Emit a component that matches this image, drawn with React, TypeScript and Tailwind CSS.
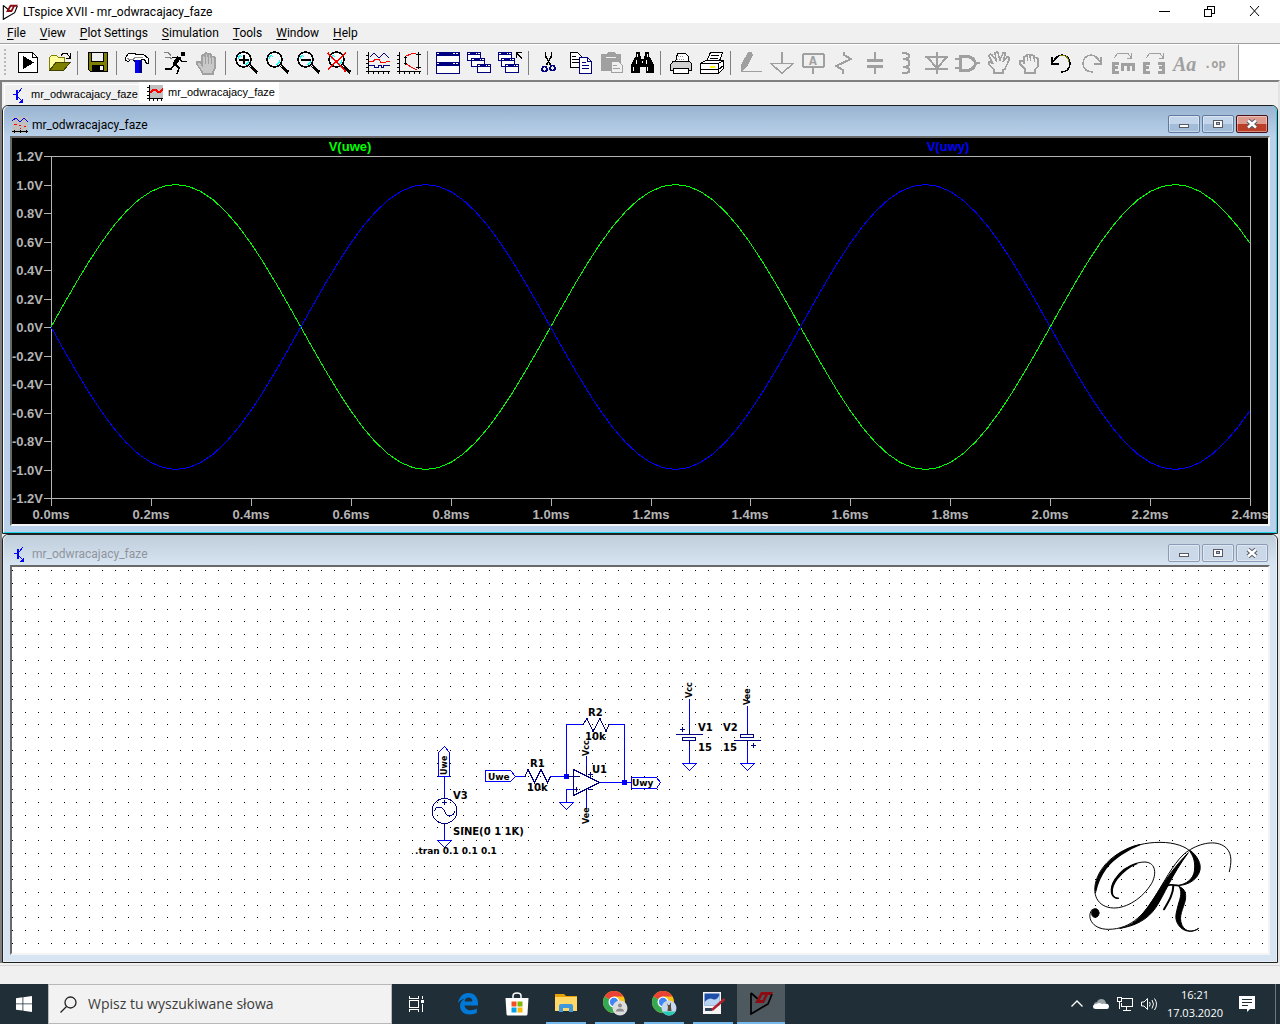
import type { ReactNode } from "react";

const NAVY = "#000080";
const GRAY = "#a0a0a0";

function Icon({ children }: { children: ReactNode }) {
  return (
    <svg viewBox="0 0 25 24" className="h-6 w-[25px]" shapeRendering="crispEdges" fill="none" aria-hidden="true">
      {children}
    </svg>
  );
}

function Lens({ children }: { children?: ReactNode }) {
  return (
    <Icon>
      <circle cx="10.5" cy="8.5" r="7.5" fill="#f8f8f8" stroke="#000" strokeWidth="1.5" />
      <path d="M5.500 8V6l2-2M15.500 9v2l-3 3M7.500 6.500l1-1" stroke="#00ffff" />
      <path d="M15.500 13.500l9 8" stroke="#000" strokeWidth="3" />
      <path d="M16 14l2 2" stroke="#fff" />
      {children}
    </Icon>
  );
}

function MiniWindow({ x, y }: { x: number; y: number }) {
  return (
    <g>
      <rect x={x + 0.5} y={y + 0.5} width="13" height="8" fill="#fff" stroke={NAVY} />
      <rect x={x} y={y} width="14" height="3" fill={NAVY} />
      <path d={`M${x + 1} ${y + 1.5}h2M${x + 9} ${y + 1.5}h1M${x + 11} ${y + 1.5}h2`} stroke="#fff" />
    </g>
  );
}

type Tool = { label: string; icon: ReactNode };

const toolGroups: Tool[][] = [
  [
    {
      label: "Run",
      icon: (
        <Icon>
          <path d="M3.500 1.500h14l5 5v15h-19z" fill="#fff" stroke="#000" />
          <path d="M17.500 1.500v5h5" stroke="#000" />
          <path d="M8 5l11 6.500L8 18z" fill="#000" />
        </Icon>
      ),
    },
    {
      label: "Open",
      icon: (
        <Icon>
          <path d="M3.500 19.500v-13l2-2h5l2 2h6v5h-9z" fill="#ffffa0" stroke="#808000" />
          <path d="M3.500 19.500l7-8.500h14l-7 8.500z" fill="#808000" stroke="#404000" />
          <path d="M15 4.500l2-2h4l3 4M24.500 2v5h-5" stroke="#000" />
        </Icon>
      ),
    },
  ],
  [
    {
      label: "Save",
      icon: (
        <Icon>
          <path d="M3.500 1.500h19v19h-17l-2-2z" fill="#808000" stroke="#000" />
          <path d="M6.500 1.500h12v9h-12z" fill="#f0f0f0" stroke="#000" />
          <path d="M7 14h12v6.500H7z" fill="#000" />
          <path d="M15 15h3v4h-3z" fill="#f0f0f0" />
        </Icon>
      ),
    },
  ],
  [
    {
      label: "Control Panel",
      icon: (
        <Icon>
          <path d="M1.500 6.500l3-4h6l2 1h7l5 4v5h-2l-2-4h-3l-1 2h-6l-1-2h-3l-2 2-3-1z" fill="#fff" stroke="#000" />
          <path d="M3 7.500l3 1h3l2-2h8" stroke="#909090" />
          <path d="M11 9h5v13h-5z" fill="#0000ff" />
          <path d="M15 9h3v13h-3z" fill={NAVY} />
        </Icon>
      ),
    },
  ],
  [
    {
      label: "Simulate",
      icon: (
        <Icon>
          <path d="M18 1h4v4h-4z" fill="#000" />
          <path d="M17 6l-5 8M9 6.500h7l3 4h5M12 13l4 4-2 6M12 13l-4 5H2" stroke="#000" strokeWidth="1.500" />
          <path d="M16 6l-5 8" stroke="#000" strokeWidth="4" />
          <path d="M1 1.500h4l3 3M2 6h4l3 2" stroke="#808080" />
        </Icon>
      ),
    },
    {
      label: "Halt",
      icon: (
        <Icon>
          <path
            d="M8 21l-5-8v-2h3l2 3V5q1-2 3 0V3q1-2 3 0v1q2-2 3 0v2q3-1 4 1v10l-2 4v2H9z"
            fill="#c8c8c8"
            stroke={GRAY}
            strokeWidth="1.500"
          />
          <path d="M11.500 4v9M14.500 4v9M17.500 5v8" stroke={GRAY} strokeWidth="1.500" />
        </Icon>
      ),
    },
  ],
  [
    {
      label: "Zoom in",
      icon: (
        <Lens>
          <path d="M11 4v9M6 9h10" stroke="#000" strokeWidth="2" />
        </Lens>
      ),
    },
    { label: "Pan", icon: <Lens /> },
    {
      label: "Zoom out",
      icon: (
        <Lens>
          <path d="M6 9h10" stroke="#000" strokeWidth="2" />
        </Lens>
      ),
    },
    {
      label: "Zoom to fit",
      icon: (
        <Lens>
          <path d="M2 2l18 19M20 2L2 18" stroke="#ff0000" strokeWidth="1.500" />
        </Lens>
      ),
    },
  ],
  [
    {
      label: "Autorange",
      icon: (
        <Icon>
          <path d="M3.500 1v22M1 20.500h24M1 4.500h2M1 8.500h2M1 12.500h2M1 16.500h2M8.500 21v2M13.500 21v2M18.500 21v2M23.500 21v2" stroke="#000" />
          <path d="M5 6l4-4 5 5 5-5 5 5" stroke={NAVY} />
          <path d="M4 10.500h4l2-2h4l2 3h4l2-1h3" stroke="#ff0000" />
          <path d="M4 14.500h5v2h4v-2h3v2h2v-2h7" stroke={NAVY} />
        </Icon>
      ),
    },
    {
      label: "Pick visible traces",
      icon: (
        <Icon>
          <path d="M3.500 1v22M1 20.500h24M1 4.500h2M1 8.500h2M1 12.500h2M1 16.500h2M8.500 21v2M13.500 21v2M18.500 21v2M23.500 21v2" stroke="#000" />
          <path d="M20 2.500h-4l-7 3M9 12l6 4 6 3" stroke="#ff0000" />
          <path d="M9.500 5v9M8 6.500h3M8 12.500h3M22.500 1v17M20 3.500h5M20 16.500h5" stroke="#000" />
        </Icon>
      ),
    },
  ],
  [
    {
      label: "Tile windows",
      icon: (
        <Icon>
          <rect x="1.500" y="1.500" width="23" height="21" fill="#fff" stroke={NAVY} />
          <path d="M1 3h24M1 13h24" stroke={NAVY} strokeWidth="4" />
          <path d="M2 2.500h2M18 2.500h2M21 2.500h2M2 12.500h2M18 12.500h2M21 12.500h2" stroke="#fff" />
        </Icon>
      ),
    },
    {
      label: "Cascade windows",
      icon: (
        <Icon>
          <MiniWindow x={1} y={1} />
          <MiniWindow x={5} y={7} />
          <MiniWindow x={11} y={13} />
        </Icon>
      ),
    },
    {
      label: "Close all windows",
      icon: (
        <Icon>
          <MiniWindow x={1} y={1} />
          <MiniWindow x={4} y={7} />
          <MiniWindow x={8} y={13} />
          <path d="M19.500 7V1.500H25M20 2l5 6" stroke="#000" strokeWidth="1.500" />
        </Icon>
      ),
    },
  ],
  [
    {
      label: "Cut",
      icon: (
        <Icon>
          <path d="M9.500 1v4l5 9M15.500 1v4l-5 9" stroke="#000" strokeWidth="1.500" />
          <circle cx="8.500" cy="18" r="2.500" stroke={NAVY} strokeWidth="1.500" />
          <circle cx="16.500" cy="17" r="2.500" stroke={NAVY} strokeWidth="1.500" />
        </Icon>
      ),
    },
    {
      label: "Copy",
      icon: (
        <Icon>
          <path d="M3.500 1.500h7l4 4v11h-11z" fill="#fff" stroke="#000" />
          <path d="M5 5.500h4M5 8.500h7M5 11.500h7" stroke="#000" />
          <path d="M12.500 6.500h8l4 4v12h-12z" fill="#fff" stroke={NAVY} />
          <path d="M20.500 6.500v4h4M15 11.500h4M15 14.500h7M15 17.500h7" stroke={NAVY} />
        </Icon>
      ),
    },
    {
      label: "Paste",
      icon: (
        <Icon>
          <path d="M3 3h5l2-2h6l2 2h5v17H3z" fill={GRAY} />
          <path d="M8 6h10" stroke="#f0f0f0" />
          <path d="M13.500 10.500h7l4 4v7h-11z" fill="#f0f0f0" stroke={GRAY} />
          <path d="M15 14.500h4M15 17.500h7" stroke={GRAY} />
        </Icon>
      ),
    },
    {
      label: "Find",
      icon: (
        <Icon>
          <path d="M7 1h4v4h1v3h3V5h1V1h4v4l2 3 3 6v8h-8v-6h-6v6H2v-8l3-6 2-3z" fill="#000" />
          <path d="M8.500 3v3M18.500 3v3M7.500 9v4M17.500 9v4M4.500 16v4M18.500 16v4M13.500 10v2" stroke="#fff" />
        </Icon>
      ),
    },
  ],
  [
    {
      label: "Print",
      icon: (
        <Icon>
          <path d="M7.500 11l2-8.500h8l3 3V11" fill="#fff" stroke="#000" />
          <path d="M2.500 13.500l3-3.500h16l2 3v6.500h-21z" fill="#d0d0d0" stroke="#000" />
          <path d="M5.500 17.500h15v5h-15z" fill="#fff" stroke="#000" />
          <path d="M10 5.500h6M9 8.500h8" stroke="#909090" strokeDasharray="1 1" />
        </Icon>
      ),
    },
    {
      label: "Print setup",
      icon: (
        <Icon>
          <path d="M7.500 10l4-8.500h12l-3 8.500" fill="#fff" stroke="#000" />
          <path d="M1.500 12.500l5-3h18v8l-5 5h-18z" fill="#fff" stroke="#000" />
          <path d="M1.500 12.500h18v10M19.500 12.500l5-3M1.500 18.500h18l5-4M12 4.500h8M11 7.500h8" stroke="#000" />
          <path d="M11 15.500h5" stroke="#ffff00" strokeWidth="2" />
        </Icon>
      ),
    },
  ],
  [
    {
      label: "Wire",
      icon: (
        <Icon>
          <path d="M10 1h4l1 3-6 12-6 5v-7z" fill={GRAY} />
          <path d="M3 20.500h21" stroke={GRAY} />
        </Icon>
      ),
    },
    {
      label: "Ground",
      icon: (
        <Icon>
          <path d="M13 1v11" stroke={GRAY} strokeWidth="2" />
          <path d="M2 12.500h22l-11 10z" stroke={GRAY} strokeWidth="1.500" />
        </Icon>
      ),
    },
    {
      label: "Label net",
      icon: (
        <Icon>
          <rect x="3" y="3" width="21" height="13" rx="2" stroke={GRAY} strokeWidth="2" />
          <path d="M13 16v7" stroke={GRAY} strokeWidth="2" />
          <text x="9" y="14" fontSize="13" fontWeight="700" fontFamily="Liberation Mono, monospace" fill={GRAY}>
            A
          </text>
        </Icon>
      ),
    },
    {
      label: "Resistor",
      icon: (
        <Icon>
          <path d="M13 1v3l7 4-15 7 7 4v4" stroke={GRAY} strokeWidth="2" />
        </Icon>
      ),
    },
    {
      label: "Capacitor",
      icon: (
        <Icon>
          <path d="M13 1v9M13 15v8" stroke={GRAY} strokeWidth="2" />
          <path d="M5 9.500h16M5 15.500h16" stroke={GRAY} strokeWidth="3" />
        </Icon>
      ),
    },
    {
      label: "Inductor",
      icon: (
        <Icon>
          <path d="M9 2h4l3 2v2l-3 2h-3 3l3 2v4l-3 2h-3 3l3 2v3l-3 1h-4" stroke={GRAY} strokeWidth="2" />
        </Icon>
      ),
    },
    {
      label: "Diode",
      icon: (
        <Icon>
          <path d="M13 1v22M1 6h23M1 18h23M3 6l10 11L23 6" stroke={GRAY} strokeWidth="2" />
        </Icon>
      ),
    },
    {
      label: "Component",
      icon: (
        <Icon>
          <path d="M5.500 5.500h7q7 1 8 7-1 6-8 7h-7z" stroke={GRAY} strokeWidth="3" />
          <path d="M0 8h5M0 17h5M20 12h5" stroke={GRAY} strokeWidth="2" />
        </Icon>
      ),
    },
    {
      label: "Move",
      icon: (
        <Icon>
          <path
            d="M8 22v-3l-5-6q-1-3 2-2l2 2-4-8q1-3 3-1l4 5-1-7q2-2 3 0l2 7 3-7q3-1 2 2l-2 7 4-5q3 0 2 3l-4 9-2 1v3z"
            stroke={GRAY}
            strokeWidth="1.500"
          />
        </Icon>
      ),
    },
    {
      label: "Drag",
      icon: (
        <Icon>
          <path
            d="M8 22v-4l-5-5v-3h4v3-7q2-2 3 0V4q2-1 3 0v1q2-2 4 0v2q3-1 4 1v7l-3 4v3z"
            stroke={GRAY}
            strokeWidth="1.500"
          />
          <path d="M10.500 5v5M13.500 5v5M17.500 7v4" stroke={GRAY} />
        </Icon>
      ),
    },
    {
      label: "Undo",
      icon: (
        <Icon>
          <path d="M5 11q4-7 9-7 8 1 8 9-1 8-9 8" stroke="#000" strokeWidth="1.500" />
          <path d="M12 4q8 0 9 7" stroke="#808000" />
          <path d="M4 6v7h7" stroke="#000" strokeWidth="2" />
        </Icon>
      ),
    },
    {
      label: "Redo",
      icon: (
        <Icon>
          <path d="M21 11q-4-7-9-7-8 1-8 9 1 8 10 8" stroke={GRAY} strokeWidth="1.500" />
          <path d="M22 6v7h-7" stroke={GRAY} strokeWidth="2" />
        </Icon>
      ),
    },
    {
      label: "Rotate",
      icon: (
        <Icon>
          <path d="M4 7l4-5h10l3 5M21.500 2v5h-5" stroke={GRAY} />
          <path d="M9 12H3.500v9.500H9M3 16.500h5M12.500 20v-6.500H23.500V20M18 13v7" stroke={GRAY} strokeWidth="3" />
        </Icon>
      ),
    },
    {
      label: "Mirror",
      icon: (
        <Icon>
          <path d="M5 7l4-5h10l3 5M22.500 2v5h-5" stroke={GRAY} />
          <path d="M9 12H3.500v9.500H9M3 16.500h5M17 12h5.500v9.500H17M23 16.500h-5" stroke={GRAY} strokeWidth="3" />
        </Icon>
      ),
    },
    {
      label: "Text",
      icon: (
        <Icon>
          <text x="1" y="20" fontSize="20" fontWeight="700" fontStyle="italic" fontFamily="Liberation Serif, serif" fill={GRAY}>
            Aa
          </text>
        </Icon>
      ),
    },
    {
      label: "SPICE directive",
      icon: (
        <Icon>
          <text x="1" y="17" fontSize="12" fontWeight="700" fontFamily="DejaVu Sans Mono, monospace" fill={GRAY}>
            .op
          </text>
        </Icon>
      ),
    },
  ],
];

function Logo({ className }: { className: string }) {
  return (
    <svg viewBox="0 0 24 24" className={className} fill="none" aria-hidden="true">
      <path d="M2 2v21l17-10 4-10M2 2l8 7" stroke="#000" strokeWidth="1.700" />
      <path d="M12 1h3l-4 8h3l-1 3H6zM14 1h10l-2 3h-3l-4 8h-3l4-8h-3z" fill="#8b0d12" />
    </svg>
  );
}

function TransistorIcon() {
  return (
    <svg viewBox="0 0 16 16" className="size-4" shapeRendering="crispEdges" fill="none" aria-hidden="true">
      <path d="M2 7.500h4M7 6l4-5M7 10l5 5" stroke="#0000ff" />
      <path d="M6 3v10" stroke="#0000ff" strokeWidth="2" />
      <path d="M12 11v5H8z" fill="#0000ff" />
    </svg>
  );
}

function TraceIcon() {
  return (
    <svg viewBox="0 0 16 16" className="size-4" shapeRendering="crispEdges" fill="none" aria-hidden="true">
      <path d="M2 0h14v13H2z" fill="#c0c0c0" />
      <path d="M2.500 0v16M0 13.500h16M0 2.500h2M0 6.500h2M0 10.500h2M6.500 14v2M10.500 14v2M14.500 14v2" stroke="#000" />
      <path d="M3 8l3-3h3l2 2h2l3-3" stroke="#ff0000" strokeWidth="1.500" />
    </svg>
  );
}

function WaveIcon() {
  return (
    <svg viewBox="0 0 16 16" className="size-4" shapeRendering="crispEdges" fill="none" aria-hidden="true">
      <path d="M0 0h16v16H0z" fill="#c0c0c0" />
      <path d="M0 4l4-3 4 4 4-4 4 4" stroke="#0000ff" />
      <path d="M2 7.500h3M7 8.500h2M12 9.500h2M8 11.500h1" stroke="#ff0000" />
      <path d="M0 14.500h16M2.500 13v3M8.500 13v3M14.500 13v3" stroke="#000" />
    </svg>
  );
}

function CaptionButtons({ active }: { active: boolean }) {
  const plain = active
    ? "border-[#5f7a9e] bg-linear-to-b from-[#c3d5ea] from-50% to-[#a3bcd8] to-50%"
    : "border-[#8a9bb5] bg-[#cbd8e7]";
  const close = active
    ? "border-[#4a1018] bg-linear-to-b from-[#dd9a8e] from-50% to-[#bb3e27] to-50%"
    : "border-[#8a9bb5] bg-[#cbd8e7]";
  const base = "flex h-[18px] w-8 items-center justify-center rounded-xs border shadow-[inset_0_0_0_1px_rgba(255,255,255,0.4)]";
  return (
    <div className="flex gap-0.5 pt-[9px]">
      <button aria-label="Minimize" className={`${base} ${plain}`}>
        <svg viewBox="0 0 12 10" className="h-2.5 w-3" shapeRendering="crispEdges" aria-hidden="true">
          <rect x="1.500" y="5.500" width="9" height="3" fill="#fff" stroke="#555a66" />
        </svg>
      </button>
      <button aria-label="Maximize" className={`${base} ${plain}`}>
        <svg viewBox="0 0 12 10" className="h-2.5 w-3" shapeRendering="crispEdges" aria-hidden="true">
          <rect x="1.500" y="1.500" width="9" height="7" fill="#fff" stroke="#555a66" />
          <rect x="4.500" y="3.500" width="3" height="2" fill="#a3bcd8" stroke="#555a66" />
        </svg>
      </button>
      <button aria-label="Close" className={`${base} ${close}`}>
        <svg viewBox="0 0 12 10" className="h-2.5 w-3" aria-hidden="true">
          <path d="M2 1.500l8 7M10 1.500l-8 7" stroke="#555a66" strokeWidth="4.500" />
          <path d="M2 1.500l8 7M10 1.500l-8 7" stroke="#fff" strokeWidth="2.500" />
        </svg>
      </button>
    </div>
  );
}

function MdiWindow({ title, icon, active, children }: { title: string; icon: ReactNode; active: boolean; children: ReactNode }) {
  return (
    <section className="rounded-t-md border border-[#202020] bg-[#f0f0f0]">
      <div
        className={`rounded-t-md border-x border-b px-1.5 pb-1.5 ${
          active
            ? "border-b-[#22d3ee] border-l-white border-r-[#22d3ee] bg-[#b9d1ea] bg-linear-to-b from-[#99b4d1] to-[#b9d1ea] to-[30px]"
            : "border-[#e8eef5] bg-[#d7e4f2] bg-linear-to-b from-[#bfcddb] to-[#d7e4f2] to-[30px]"
        }`}
      >
        <header className="flex h-[30px] items-start px-0.5">
          <span className="pt-[11px]">{icon}</span>
          <h2 className={`flex-1 pt-[11px] pl-1 leading-4 ${active ? "text-black" : "text-[#8f959c]"}`}>{title}</h2>
          <CaptionButtons active={active} />
        </header>
        <div className="border-2 border-t-[#696969] border-r-[#f4f4f4] border-b-[#f4f4f4] border-l-[#696969]">{children}</div>
      </div>
    </section>
  );
}

const PLOT = { left: 51, right: 1250, top: 156, bottom: 498 };
const msToX = (ms: number) => PLOT.left + (ms / 2.4) * (PLOT.right - PLOT.left);
const voltsToY = (v: number) => 327 - v * 142.5;

function trace(amplitude: number) {
  const points: string[] = [];
  for (let i = 0; i <= 96; i++) {
    const ms = i / 40;
    points.push(`${msToX(ms).toFixed(1)},${voltsToY(amplitude * Math.sin(2 * Math.PI * ms)).toFixed(1)}`);
  }
  return points.join(" ");
}

function Waveform() {
  const volts = Array.from({ length: 13 }, (_, i) => (6 - i) / 5);
  const times = Array.from({ length: 13 }, (_, i) => i / 5);
  return (
    <svg viewBox="12 138 1256 386" className="block w-full bg-black" fontFamily="Liberation Sans, Arial, sans-serif" fontSize="13" fontWeight="700">
      <g shapeRendering="crispEdges" fill="none" stroke="#b4b4b4">
        <rect x="51.500" y="156.500" width="1199" height="342" />
        {volts.map((v) => (
          <path key={v} d={`M44 ${Math.round(voltsToY(v)) + 0.5}h7`} />
        ))}
        {times.map((t) => (
          <path key={t} d={`M${Math.round(msToX(t)) + 0.5} 498v8`} />
        ))}
      </g>
      <g fill="#b4b4b4">
        {volts.map((v) => (
          <text key={v} x="43" y={Math.round(voltsToY(v)) + 5} textAnchor="end">
            {v.toFixed(1)}V
          </text>
        ))}
        {times.map((t) => (
          <text key={t} x={Math.round(msToX(t))} y="519" textAnchor="middle">
            {t.toFixed(1)}ms
          </text>
        ))}
      </g>
      <text x="350" y="151" textAnchor="middle" fill="#00ff00">
        V(uwe)
      </text>
      <text x="948" y="151" textAnchor="middle" fill="#0000ff">
        V(uwy)
      </text>
      <g fill="none" shapeRendering="crispEdges">
        <polyline points={trace(1)} stroke="#00ff00" />
        <polyline points={trace(-1)} stroke="#0000ff" />
      </g>
    </svg>
  );
}

function gridDots() {
  let d = "";
  for (let row = 0; row < 30; row++) {
    for (let col = 0; col < 98; col++) {
      d += `M${Math.round(12 + col * 12.89)} ${Math.round(570 + row * 12.87)}h1v1h-1z`;
    }
  }
  return d;
}

function Monogram() {
  return (
    <g transform="translate(1060 820) scale(0.3333)" fill="none" stroke="#000" strokeWidth="3" strokeLinecap="round">
      <ellipse cx="106" cy="279" rx="11" ry="13" fill="#000" />
      <path d="M97 268C78 288 94 328 145 328C215 328 258 280 300 205C335 145 360 105 392 88C430 66 475 60 500 85C517 103 514 130 508 155" />
      <path d="M176 235C150 236 148 200 168 175C195 142 225 126 255 126C290 128 289 165 275 190C248 235 200 265 160 264C112 262 92 222 112 172C138 108 215 67 300 67C345 67 378 80 392 95" />
      <path d="M176 235C152 236 150 205 172 176C190 153 215 137 232 130C200 138 178 158 165 178C148 206 150 235 176 235Z" fill="#000" strokeWidth="4" />
      <path d="M107 215C104 180 122 145 165 110C190 90 220 78 240 74C205 87 160 115 138 145C120 170 112 190 107 215Z" fill="#000" strokeWidth="4" />
      <path d="M392 92C412 108 424 130 420 150C414 178 385 195 358 196C390 188 404 168 404 144C405 120 398 106 390 95Z" fill="#000" />
      <path d="M180 325C225 318 262 300 288 262C312 226 335 165 385 98C345 138 318 178 296 212C268 256 246 290 216 311C200 320 190 323 180 325Z" fill="#000" />
      <path d="M312 203C325 190 342 195 358 197" strokeWidth="5" />
      <path d="M340 197C340 222 326 244 312 268" strokeWidth="6" />
      <path d="M358 200C376 206 379 222 376 240C370 268 354 288 366 316C378 338 400 337 416 325C398 338 372 338 356 316C344 298 347 285 352 265C358 238 369 222 358 200Z" fill="#000" />
    </g>
  );
}

function VerticalLabel({ x, y, children }: { x: number; y: number; children: string }) {
  return (
    <text transform={`translate(${x} ${y}) rotate(-90)`} fontSize="8">
      {children}
    </text>
  );
}

function Schematic() {
  return (
    <svg viewBox="12 567 1256 386" className="block w-full bg-white" fontFamily="DejaVu Sans, Verdana, sans-serif" fontSize="10" fontWeight="700">
      <path d={gridDots()} fill="#000" shapeRendering="crispEdges" />
      {/* wires, flags and grounds */}
      <g fill="none" stroke="#0000ff" shapeRendering="crispEdges">
        <path d="M438.500 776.500v-24l6-6 5 6v24zM444.500 776v22M444.500 824v16M437.500 840.500h14l-7 7z" />
        <path d="M485.500 770.500h25l5 6-5 5h-25zM516 776.500h9M550 776.500h17M566.500 776v-52h17M609 724.500h15.500v58M599 782.500h32" />
        <path d="M631.500 777.500h25l4 5-4 6h-25zM586.500 756v12M586.500 792v17M566.500 802v-12.500h7M559.500 802.500h14l-7 7z" />
        <path d="M689.500 699v30M689.500 745v18M682.500 763.500h14l-7 7zM747.500 706v23M747.500 745v18M740.500 763.500h14l-7 7z" />
      </g>
      <path d="M564 774h5v5h-5zM622 780h5v5h-5z" fill="#0000ff" />
      {/* component bodies */}
      <g fill="none" stroke={NAVY} shapeRendering="crispEdges">
        <circle cx="444.500" cy="811" r="12.500" />
        <path d="M434.500 811q1-4 5-4 4 1 5 4 2 5 5 5 5-1 5-5M442 802.500h5M444.500 800v5M444.500 823v4" />
        <path d="M524 776.500h1l3-7 6.500 13 6.500-13 6.500 13 3-6" />
        <path d="M582 724.500h1l4-6 6 13 7-13 6 13 3-7h1" />
        <path d="M573.500 769.500v26l26-13zM567 776.500h12M573 789.500h5M576.500 787v5M586.500 766v10M586.500 789v5M588 774.500h5M590.500 772v5M588 789.500h4" />
        <path d="M689.500 729v5M676 734.500h27M682.500 737.500h13v3h-13zM689.500 741v5M680 729.500h5M682.500 727v5" />
        <path d="M747.500 729v5M740.500 734.500h13v3h-13zM734 740.500h27M747.500 741v5M751 745.500h5M753.500 743v5" />
      </g>
      <g fill="#000">
        <text x="453" y="799">V3</text>
        <text x="453" y="835">SINE(0 1 1K)</text>
        <text x="415" y="854" fontSize="9">.tran 0.1 0.1 0.1</text>
        <text x="488" y="780" fontSize="9">Uwe</text>
        <text x="530" y="767">R1</text>
        <text x="527" y="791">10k</text>
        <text x="588" y="716">R2</text>
        <text x="585" y="740">10k</text>
        <text x="592" y="773">U1</text>
        <text x="632" y="786" fontSize="9">Uwy</text>
        <text x="698" y="731">V1</text>
        <text x="698" y="751">15</text>
        <text x="723" y="731">V2</text>
        <text x="723" y="751">15</text>
        <VerticalLabel x={447} y={775}>Uwe</VerticalLabel>
        <VerticalLabel x={589} y={756}>Vcc</VerticalLabel>
        <VerticalLabel x={589} y={824}>Vee</VerticalLabel>
        <VerticalLabel x={692} y={698}>Vcc</VerticalLabel>
        <VerticalLabel x={750} y={705}>Vee</VerticalLabel>
      </g>
      <Monogram />
    </svg>
  );
}

function Chrome({ badge }: { badge: ReactNode }) {
  return (
    <svg viewBox="0 0 26 26" className="size-[26px]" aria-hidden="true">
      <circle cx="12" cy="12" r="11" fill="#fbc116" />
      <path d="M12 12L2.500 6.500A11 11 0 0 1 21.500 6.500H12z" fill="#ea4335" />
      <path d="M12 12L2.500 6.500A11 11 0 0 0 12 23l5-8z" fill="#34a853" />
      <circle cx="12" cy="12" r="5.500" fill="#fff" />
      <circle cx="12" cy="12" r="4.200" fill="#4285f4" />
      {badge}
    </svg>
  );
}

const taskbarApps: { label: string; open: boolean; current?: boolean; icon: ReactNode }[] = [
  {
    label: "Edge",
    open: false,
    icon: (
      <svg viewBox="0 0 20 22" className="h-[22px] w-5" aria-hidden="true">
        <path
          d="M0 10C1 4 5 0 10.500 0 17 0 20 5 20 10v2.500H6.500c.3 3 3 4.800 6.200 4.800 2.300 0 4.300-.6 6.200-1.700v4.200c-2 1.200-4.500 1.700-7 1.700C6 21.500 2 18 2 13 2 9.500 4 6.800 7 5.500 4.500 6 1.500 7.500 0 10zm6.600-1.500h7.700C14.300 6 13 4.600 10.700 4.600 8.400 4.600 7 6.200 6.600 8.500z"
          fill="#0078d7"
        />
      </svg>
    ),
  },
  {
    label: "Microsoft Store",
    open: false,
    icon: (
      <svg viewBox="0 0 24 24" className="size-6" aria-hidden="true">
        <path d="M8 7V4q0-3 4-3t4 3v3" fill="none" stroke="#fff" strokeWidth="1.500" />
        <path d="M0.500 6h23l-1 16q0 1.500-1.500 1.500H3Q1.500 23.500 1.500 22z" fill="#fff" />
        <path d="M6.500 9.500h5v5h-5z" fill="#f25022" />
        <path d="M12.500 9.500h5v5h-5z" fill="#7fba00" />
        <path d="M6.500 15.500h5v5h-5z" fill="#00a4ef" />
        <path d="M12.500 15.500h5v5h-5z" fill="#ffb900" />
      </svg>
    ),
  },
  {
    label: "File Explorer",
    open: true,
    icon: (
      <svg viewBox="0 0 24 24" className="size-6" aria-hidden="true">
        <path d="M1 3h9l2 2h11v4H1z" fill="#e8a200" />
        <path d="M1 6h22v14H1z" fill="#ffd868" />
        <path d="M5 21v-6q0-2 2-2h10q2 0 2 2v6h-4v-4H9v4z" fill="#3f97dd" />
      </svg>
    ),
  },
  {
    label: "Chrome, profile 1",
    open: true,
    icon: (
      <Chrome
        badge={
          <>
            <circle cx="18" cy="18" r="7.500" fill="#dcdcdc" />
            <circle cx="18" cy="15.500" r="2" fill="#8c8c8c" />
            <path d="M14 21.500q0-3 4-3t4 3z" fill="#8c8c8c" />
          </>
        }
      />
    ),
  },
  {
    label: "Chrome, profile 2",
    open: true,
    icon: (
      <Chrome
        badge={
          <>
            <circle cx="18" cy="18" r="7.500" fill="#c8d8ee" />
            <path d="M11.500 21.500h13Q22 25.500 18 25.500t-6.500-4z" fill="#28c8b4" />
            <path d="M15.500 12l1.500 3h1.500l1.500-3v5l.5 4h-4l.5-4z" fill="#5a4c3a" />
          </>
        }
      />
    ),
  },
  {
    label: "Paint",
    open: true,
    icon: (
      <svg viewBox="0 0 24 24" className="size-6" aria-hidden="true">
        <path d="M2 1h18v22H2z" fill="#f4f4f4" />
        <path d="M3.500 2.500h15v12h-15z" fill="#1d4fa8" />
        <path d="M3.500 11q4-5 8-3t7-4v10.500h-15z" fill="#b8d4f2" />
        <path d="M4 17h7v3H4z" fill="#33435c" />
        <path d="M23.500 8L11 19" stroke="#b3202c" strokeWidth="2.500" />
      </svg>
    ),
  },
  { label: "LTspice XVII", open: true, current: true, icon: <Logo className="size-6" /> },
];

function Taskbar() {
  return (
    <footer className="flex h-10 bg-[#202f37] text-white">
      <button aria-label="Start" className="flex w-12 items-center justify-center">
        <svg viewBox="0 0 16 16" className="size-4" fill="#fff" aria-hidden="true">
          <path d="M0 2.200L6.500 1.300v6.200H0zM7.300 1.200L16 0v7.500H7.300zM0 8.300h6.500v6.300L0 13.700zM7.300 8.300H16V16l-8.700-1.200z" />
        </svg>
      </button>
      <label className="flex w-86 items-center gap-[11px] border border-[#b8b8b8] bg-[#f2f2f2] pl-[11px]">
        <svg viewBox="0 0 17 17" className="size-[17px]" fill="none" stroke="#222" strokeWidth="1.300" aria-hidden="true">
          <circle cx="10.500" cy="6.500" r="5.500" />
          <path d="M6.500 10.500L.5 16.500" />
        </svg>
        <input
          type="text"
          aria-label="Wpisz tu wyszukiwane słowa"
          placeholder="Wpisz tu wyszukiwane słowa"
          className="min-w-0 flex-1 bg-transparent font-['Open_Sans','Noto_Sans',sans-serif] text-sm text-black outline-none placeholder:text-[#3c3c3c]"
        />
      </label>
      <button aria-label="Task view" className="mr-[3px] flex w-12 items-center justify-center">
        <svg viewBox="0 0 17 16" className="h-4 w-[17px]" fill="none" stroke="#fff" shapeRendering="crispEdges" aria-hidden="true">
          <path d="M1.500 4.500h9v7h-9zM1.500 0v2.500h9V0M1.500 16v-2.500h9V16M14.500 0v3M14.500 8v8" />
          <path d="M13 4h3v3h-3z" fill="#fff" stroke="none" />
        </svg>
      </button>
      {taskbarApps.map((app) => (
        <button
          key={app.label}
          aria-label={app.label}
          className={`flex flex-col items-center ${app.current ? "w-12 bg-[#4d585f]" : "w-[49px]"}`}
        >
          <span className="flex flex-1 items-center">{app.icon}</span>
          {app.open && <span className={`h-0.5 bg-[#76b9ed] ${app.current ? "w-full" : "w-10"}`} />}
        </button>
      ))}
      <div className="ml-auto flex items-center">
        <div className="flex items-center gap-2">
          <svg viewBox="0 0 16 16" className="size-4" fill="none" stroke="#fff" strokeWidth="1.300" aria-hidden="true">
            <path d="M2.500 10.500L8 5l5.500 5.500" />
          </svg>
          <svg viewBox="0 0 16 16" className="size-4" aria-hidden="true">
            <path d="M1 9q0-3 3-3 1-3 4.500-3T13 7l-8 4z" fill="#9aa2a6" />
            <path d="M3 13q-3 0-3-2.500T3.500 8Q6 6 9 8l3-.5q4 0 4 3T13 13z" fill="#fff" />
          </svg>
          <svg viewBox="0 0 16 16" className="size-4" fill="none" stroke="#fff" shapeRendering="crispEdges" aria-hidden="true">
            <path d="M5 2.500h10.500v8h-11V7M0.500 1.500h4v4h-4zM2.500 6v7M9.500 11v3M6 14.500h8" />
          </svg>
          <svg viewBox="0 0 16 16" className="size-4" fill="none" stroke="#fff" aria-hidden="true">
            <path d="M.5 6h2.500l3.500-3.500v11L3 10H.5zM8.500 6q1.500 2 0 4.500M11 4q3 4 0 8.500M13.500 2.500q4 5.500 0 11.500" />
          </svg>
        </div>
        <time className="ml-2.5 text-center font-['Open_Sans','Noto_Sans',sans-serif] text-[11px] leading-[18px]">
          16:21
          <br />
          17.03.2020
        </time>
        <button aria-label="Notifications" className="mr-5 ml-4">
          <svg viewBox="0 0 16 16" className="size-4" aria-hidden="true">
            <path d="M0 0h16v13h-5l-3 3v-3H0z" fill="#fff" />
            <path d="M3 3.500h10M3 6.500h10M3 9.500h6" stroke="#202f37" />
          </svg>
        </button>
        <span className="mr-1 h-10 w-px bg-[#6d777c]" />
      </div>
    </footer>
  );
}

const menus = ["File", "View", "Plot Settings", "Simulation", "Tools", "Window", "Help"];

export default function App() {
  const file = "mr_odwracajacy_faze";

  return (
    <div className="flex min-h-screen flex-col bg-[#f0f0f0] font-[Roboto,'Open_Sans',sans-serif] text-xs text-black">
      <header className="flex h-[23px] items-center bg-white pl-0.5">
        <Logo className="size-4" />
        <h1 className="flex-1 pl-[5px]">LTspice XVII - {file}</h1>
        <div className="flex gap-[29px] pr-[18px]">
          {["M1 6.500h11", "M4.500 4.500v-3h7v7h-3M1.500 4.500h7v7h-7z", "M2 1l9 10M11 1L2 11"].map((d, i) => (
            <button key={d} aria-label={["Minimize", "Restore", "Close"][i]} className="flex w-4 justify-center">
              <svg viewBox="0 0 13 13" className="size-[13px]" fill="none" stroke="#000" shapeRendering={i < 2 ? "crispEdges" : "auto"} aria-hidden="true">
                <path d={d} />
              </svg>
            </button>
          ))}
        </div>
      </header>

      <nav className="flex h-[21px] items-center gap-3.5 border-b border-[#a0a0a0] pl-[7px]">
        {menus.map((menu) => (
          <button key={menu}>
            <span className="underline underline-offset-2">{menu[0]}</span>
            {menu.slice(1)}
          </button>
        ))}
      </nav>

      <div className="flex bg-white">
        <div className="flex h-9 items-center border-t border-r border-t-white border-r-[#a0a0a0] bg-[#f0f0f0] pr-[7px]" role="toolbar">
          <span className="mr-1.5 ml-1 h-7 w-0.5 bg-[repeating-linear-gradient(to_bottom,#b8b8b8_0_2px,transparent_2px_4px)]" />
          {toolGroups.map((group, i) => (
            <div key={i} className="flex items-center">
              {i > 0 && <span className="mr-1 ml-[3px] h-6 w-px bg-[#808080]" />}
              {group.map((tool) => (
                <button key={tool.label} aria-label={tool.label} title={tool.label} className="w-[31px] pl-[3px]">
                  {tool.icon}
                </button>
              ))}
            </div>
          ))}
        </div>
      </div>

      <main className="border-t-2 border-r-2 border-l-2 border-t-[#808080] border-r-[#e3e3e3] border-l-[#808080]">
        <div className="flex h-[23px] items-start pl-0.5 font-['Liberation_Sans',Arial,sans-serif] text-[11px]" role="tablist">
          <button role="tab" aria-selected="false" className="mt-0.5 flex h-5 w-[135px] items-center gap-1 border-t border-l border-white pl-1.5">
            <TransistorIcon />
            {file}
          </button>
          <button role="tab" aria-selected="true" className="flex h-[21px] w-[140px] items-center gap-[5px] bg-white pl-2">
            <TraceIcon />
            {file}
          </button>
        </div>
        <MdiWindow title={file} icon={<WaveIcon />} active>
          <Waveform />
        </MdiWindow>
        <MdiWindow title={file} icon={<TransistorIcon />} active={false}>
          <Schematic />
        </MdiWindow>
      </main>

      <div className="mt-0.5 min-h-[19px] flex-1 border-t border-[#d4d4d4]" role="status" />
      <Taskbar />
    </div>
  );
}
